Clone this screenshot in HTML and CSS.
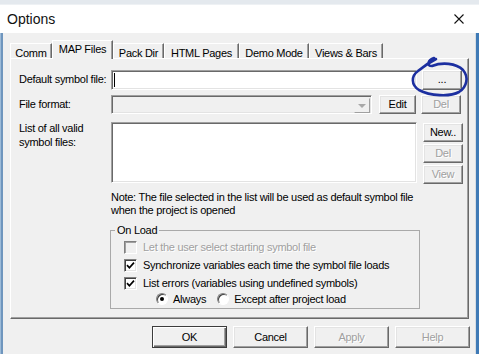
FILE: index.html
```html
<!DOCTYPE html>
<html>
<head>
<meta charset="utf-8">
<title>Options</title>
<link rel="stylesheet" href="styles.css">
</head>
<body>
<div class="top-strip"></div>
<div class="window">
  <div class="titlebar">
    <span class="title">Options</span>
    <svg class="close" width="10" height="10" viewBox="0 0 10 10"><path d="M0.5 0.5 L9.5 9.5 M9.5 0.5 L0.5 9.5" stroke="#111" stroke-width="1.1" fill="none"/></svg>
  </div>
  <div class="lower">
    <div class="edge-left"></div>
    <div class="client">
      <div class="tabs">
        <div class="tab t-comm">Comm</div>
        <div class="tab t-map selected">MAP Files</div>
        <div class="tab t-pack">Pack Dir</div>
        <div class="tab t-html">HTML Pages</div>
        <div class="tab t-demo">Demo Mode</div>
        <div class="tab t-views">Views &amp; Bars</div>
      </div>
      <div class="panel">
        <div class="row row1">
          <label class="lbl">Default symbol file:</label>
          <div class="field input"><span class="caret"></span></div>
          <button class="btn side">...</button>
        </div>
        <div class="row row2">
          <label class="lbl">File format:</label>
          <div class="field combo"><span class="arrow"><span class="tri"></span></span></div>
          <button class="btn edit">Edit</button>
          <button class="btn side disabled">Del</button>
        </div>
        <div class="row row3">
          <label class="lbl lbl2">List of all valid<br>symbol files:</label>
          <div class="field listbox"></div>
          <div class="btncol">
            <button class="btn side">New..</button>
            <button class="btn side disabled">Del</button>
            <button class="btn side disabled">View</button>
          </div>
        </div>
        <p class="note">Note: The file selected in the list will be used as default symbol file<br>when the project is opened</p>
        <fieldset class="group">
          <legend>On Load</legend>
          <div class="opt disabled-text"><span class="cb off"></span><span>Let the user select starting symbol file</span></div>
          <div class="opt"><span class="cb"><svg width="9" height="9" viewBox="0 0 9 9"><path d="M1 4.2 L3.4 6.8 L8 1.6" stroke="#000" stroke-width="1.7" fill="none"/></svg></span><span>Synchronize variables each time the symbol file loads</span></div>
          <div class="opt"><span class="cb"><svg width="9" height="9" viewBox="0 0 9 9"><path d="M1 4.2 L3.4 6.8 L8 1.6" stroke="#000" stroke-width="1.7" fill="none"/></svg></span><span>List errors (variables using undefined symbols)</span></div>
          <div class="radios">
            <span class="radio on"><span class="dot"></span></span><span class="rlabel">Always</span>
            <span class="radio"></span><span>Except after project load</span>
          </div>
        </fieldset>
      </div>
      <div class="footer">
        <button class="btn foot default">OK</button>
        <button class="btn foot">Cancel</button>
        <button class="btn foot disabled">Apply</button>
        <button class="btn foot disabled">Help</button>
      </div>
    </div>
    <div class="edge-right"></div>
  </div>
</div>
<svg class="annot" width="479" height="354" viewBox="0 0 479 354">
  <path d="M434 58 C428 60, 426 66, 432 66 C442 62, 456 63, 463 70 C469 77, 467 87, 459 92 C450 97, 430 96, 419 90 C411 85, 411 76, 418 71 C424 66, 430 62, 436 59" stroke="#1c2fa0" stroke-width="2.6" fill="none" stroke-linecap="round" stroke-linejoin="round"/>
</svg>
</body>
</html>
```
FILE: styles.css
```css
* { box-sizing: border-box; }
body {
  margin: 0;
  width: 479px;
  height: 354px;
  overflow: hidden;
  background: #e6ebf0;
  font-family: "Liberation Sans", Arial, sans-serif;
  font-size: 11px;
  letter-spacing: -0.28px;
  color: #000;
  position: relative;
}
.top-strip { height: 5px; background: #e4e9ee; border-bottom: 1px solid #eef1f4; }
.window { height: 349px; display: flex; flex-direction: column; }
.titlebar {
  height: 28px;
  flex: none;
  background: #fff;
  display: flex;
  align-items: center;
  justify-content: space-between;
  padding: 0 15px 0 7px;
}
.title { font-size: 14px; letter-spacing: 0; color: #111; }
.lower { flex: 1; display: flex; }
.edge-left { width: 3px; background: linear-gradient(90deg, #9dbbd8 0, #9dbbd8 1px, #6f96be 1px, #6f96be 3px); }
.edge-right { width: 4px; background: linear-gradient(90deg, #d7dde3 0, #d7dde3 1px, #3f7ab6 1px); }
.client { flex: 1; background: #f0f0f0; display: flex; flex-direction: column; }

.tabs {
  display: flex;
  align-items: flex-start;
  height: 18px;
  margin: 7px 0 0 7px;
  position: relative;
  z-index: 2;
}
.tab {
  height: 15px;
  margin-top: 3px;
  padding-top: 3px;
  line-height: 13px;
  text-align: center;
  border-top: 1px solid #fff;
  border-left: 1px solid #fff;
  border-right: 1px solid #696969;
  box-shadow: inset -1px 0 #a0a0a0;
  background: #f0f0f0;
  white-space: nowrap;
}
.tab.selected { height: 19px; margin-top: 0; padding-top: 2px; }
.t-comm { width: 42px; }
.t-map { width: 61px; }
.t-pack { width: 51px; }
.t-html { width: 75px; }
.t-demo { width: 70px; }
.t-views { width: 74px; }

.panel {
  height: 261px;
  margin: 0 6px 0 7px;
  border-top: 1px solid #fff;
  border-left: 1px solid #fff;
  border-right: 1px solid #696969;
  border-bottom: 1px solid #696969;
  box-shadow: inset -1px -1px #a0a0a0;
  padding: 10px 0 0 8px;
}
.row { display: flex; align-items: center; }
.row1 { height: 21px; }
.row2 { height: 19px; margin-top: 5px; }
.row3 { align-items: flex-start; margin-top: 8px; }
.lbl { width: 92px; flex: none; line-height: 13px; }
.lbl2 { line-height: 14px; margin-top: -1px; }

.field {
  border: 1px solid;
  border-color: #a0a0a0 #fff #fff #a0a0a0;
  box-shadow: inset 1px 1px #696969, inset -1px -1px #e3e3e3;
  background: #fff;
}
.input { width: 306px; height: 20px; padding: 2px 0 0 2px; }
.caret { display: block; width: 1px; height: 14px; background: #000; }
.combo {
  width: 261px;
  height: 19px;
  background: #f0f0f0;
  display: flex;
  justify-content: flex-end;
  padding: 1px;
}
.arrow {
  width: 16px;
  height: 15px;
  margin: 1px 0 0;
  border: 1px solid;
  border-color: #f0f0f0 #a0a0a0 #a0a0a0 #f0f0f0;
  display: flex;
  align-items: center;
  justify-content: center;
}
.tri {
  width: 0; height: 0;
  border-left: 4px solid transparent;
  border-right: 4px solid transparent;
  border-top: 4px solid #a8a8a8;
}
.listbox { width: 306px; height: 61px; }

.btn {
  font: inherit;
  letter-spacing: inherit;
  color: #000;
  background: #f0f0f0;
  border: 1px solid;
  border-color: #fff #696969 #696969 #fff;
  box-shadow: inset -1px -1px #a0a0a0, inset 1px 1px #e3e3e3;
  padding: 0;
  margin: 0;
  line-height: 13px;
}
.btn.disabled { color: #a0a0a0; text-shadow: 1px 1px #fff; }
.side { width: 40px; height: 20px; margin-left: 5px; }
.row2 .side { height: 19px; }
.edit { width: 37px; height: 19px; margin-left: 7px; }
.btncol { display: flex; flex-direction: column; gap: 2px; margin-top: 1px; }
.btncol .side { height: 19px; margin-left: 6px; }

.note { margin: 7px 0 0 92px; line-height: 13px; }

.group {
  margin: 7px 0 0 91px;
  width: 310px;
  padding: 1px 0 2px 13px;
  border: 1px solid #a9a9a9;
  min-inline-size: 0;
}
.group legend { padding: 0 2px; margin-left: -9px; line-height: 13px; }
.opt { display: flex; align-items: center; height: 18px; gap: 6px; }
.disabled-text { color: #a0a0a0; text-shadow: 1px 1px #fff; }
.cb {
  width: 13px;
  height: 13px;
  flex: none;
  border: 1px solid;
  border-color: #808080 #fff #fff #808080;
  box-shadow: inset 1px 1px #404040, inset -1px -1px #e3e3e3;
  background: #fff;
  display: flex;
  align-items: center;
  justify-content: center;
}
.cb.off { background: #f0f0f0; box-shadow: inset 1px 1px #a0a0a0; }
.cb svg { display: block; }
.radios { display: flex; align-items: center; height: 14px; margin-left: 32px; }
.radio {
  width: 12px;
  height: 12px;
  flex: none;
  border-radius: 50%;
  border: 1px solid;
  border-color: #808080 #fff #fff #808080;
  box-shadow: inset 1px 1px #404040;
  background: #fff;
  display: flex;
  align-items: center;
  justify-content: center;
  margin-right: 5px;
}
.dot { width: 4px; height: 4px; border-radius: 50%; background: #000; }
.rlabel { margin-right: 11px; }

.footer {
  display: flex;
  justify-content: flex-end;
  gap: 6px;
  margin-top: 7px;
  padding-right: 5px;
}
.foot { width: 75px; height: 22px; }
.default {
  border: 1px solid #3c3c3c;
  box-shadow: inset 1px 1px #fff, inset -1px -1px #696969, inset -2px -2px #a0a0a0;
}

.annot { position: absolute; left: 0; top: 0; pointer-events: none; }
```
